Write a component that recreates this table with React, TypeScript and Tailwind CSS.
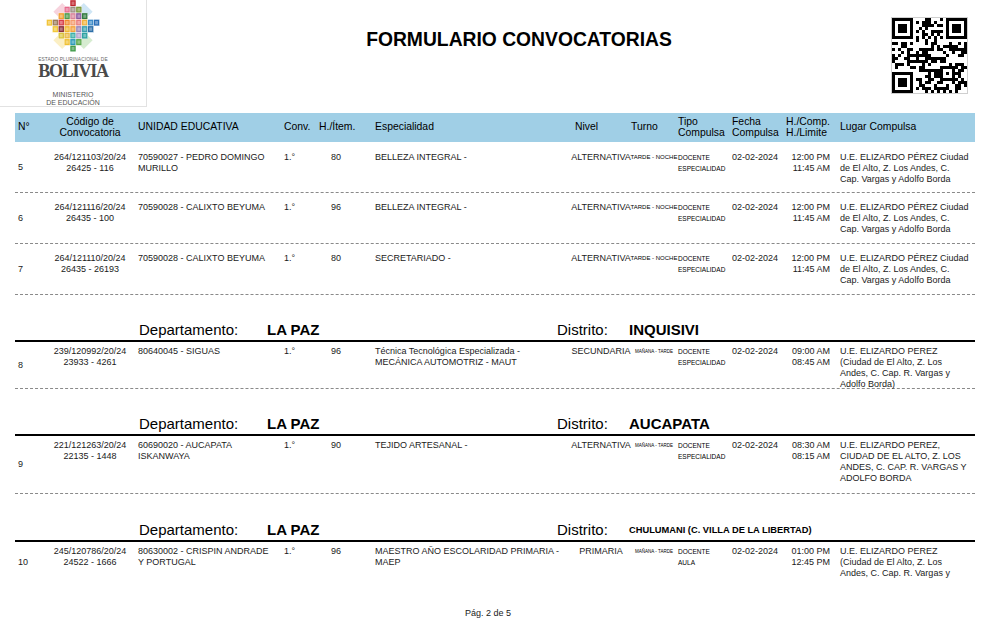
import React from "react";

type Row = {
  n: string;
  h: string;
  pt: string;
  dashed: boolean;
  codigo: string[];
  unidad: string[];
  item: string;
  esp: string[];
  nivel: string;
  turno: string;
  turnoCls: string;
  tipo: string[];
  horas: string[];
  lugar: string[];
};

type Group = {
  distrito: string;
  distritoCls: string;
  h: string;
  rows: Row[];
};

const LUGAR_ALTO = [
  "U.E. ELIZARDO PÉREZ Ciudad",
  "de El Alto, Z. Los Andes, C.",
  "Cap. Vargas y Adolfo Borda",
];

const firstRows: Row[] = [
  {
    n: "5",
    h: "h-[51px]",
    pt: "pt-[10px]",
    dashed: true,
    codigo: ["264/121103/20/24", "26425 - 116"],
    unidad: ["70590027 - PEDRO DOMINGO", "MURILLO"],
    item: "80",
    esp: ["BELLEZA INTEGRAL -"],
    nivel: "ALTERNATIVA",
    turno: "TARDE - NOCHE",
    turnoCls: "text-[6px]",
    tipo: ["DOCENTE", "ESPECIALIDAD"],
    horas: ["12:00 PM", "11:45 AM"],
    lugar: LUGAR_ALTO,
  },
  {
    n: "6",
    h: "h-[51px]",
    pt: "pt-[9px]",
    dashed: true,
    codigo: ["264/121116/20/24", "26435 - 100"],
    unidad: ["70590028 - CALIXTO BEYUMA"],
    item: "96",
    esp: ["BELLEZA INTEGRAL -"],
    nivel: "ALTERNATIVA",
    turno: "TARDE - NOCHE",
    turnoCls: "text-[6px]",
    tipo: ["DOCENTE", "ESPECIALIDAD"],
    horas: ["12:00 PM", "11:45 AM"],
    lugar: LUGAR_ALTO,
  },
  {
    n: "7",
    h: "h-[51px]",
    pt: "pt-[9px]",
    dashed: true,
    codigo: ["264/121110/20/24", "26435 - 26193"],
    unidad: ["70590028 - CALIXTO BEYUMA"],
    item: "80",
    esp: ["SECRETARIADO -"],
    nivel: "ALTERNATIVA",
    turno: "TARDE - NOCHE",
    turnoCls: "text-[6px]",
    tipo: ["DOCENTE", "ESPECIALIDAD"],
    horas: ["12:00 PM", "11:45 AM"],
    lugar: LUGAR_ALTO,
  },
];

const groups: Group[] = [
  {
    distrito: "INQUISIVI",
    distritoCls: "text-[15px]",
    h: "h-[47px]",
    rows: [
      {
        n: "8",
        h: "h-[47px]",
        pt: "pt-[4px]",
        dashed: true,
        codigo: ["239/120992/20/24", "23933 - 4261"],
        unidad: ["80640045 - SIGUAS"],
        item: "96",
        esp: ["Técnica Tecnológica Especializada -", "MECÁNICA AUTOMOTRIZ - MAUT"],
        nivel: "SECUNDARIA",
        turno: "MAÑANA - TARDE",
        turnoCls: "text-[4.5px]",
        tipo: ["DOCENTE", "ESPECIALIDAD"],
        horas: ["09:00 AM", "08:45 AM"],
        lugar: [
          "U.E. ELIZARDO PEREZ",
          "(Ciudad de El Alto, Z. Los",
          "Andes, C. Cap. R. Vargas y",
          "Adolfo Borda)",
        ],
      },
    ],
  },
  {
    distrito: "AUCAPATA",
    distritoCls: "text-[15px]",
    h: "h-[47px]",
    rows: [
      {
        n: "9",
        h: "h-[58px]",
        pt: "pt-[4px]",
        dashed: true,
        codigo: ["221/121263/20/24", "22135 - 1448"],
        unidad: ["60690020 - AUCAPATA", "ISKANWAYA"],
        item: "90",
        esp: ["TEJIDO ARTESANAL -"],
        nivel: "ALTERNATIVA",
        turno: "MAÑANA - TARDE",
        turnoCls: "text-[4.5px]",
        tipo: ["DOCENTE", "ESPECIALIDAD"],
        horas: ["08:30 AM", "08:15 AM"],
        lugar: [
          "U.E. ELIZARDO PEREZ,",
          "CIUDAD DE EL ALTO, Z. LOS",
          "ANDES, C. CAP. R. VARGAS Y",
          "ADOLFO BORDA",
        ],
      },
    ],
  },
  {
    distrito: "CHULUMANI (C. VILLA DE LA LIBERTAD)",
    distritoCls: "text-[9.3px]",
    h: "h-[48px]",
    rows: [
      {
        n: "10",
        h: "h-[41px]",
        pt: "pt-[4px]",
        dashed: false,
        codigo: ["245/120786/20/24", "24522 - 1666"],
        unidad: ["80630002 - CRISPIN ANDRADE", "Y PORTUGAL"],
        item: "96",
        esp: ["MAESTRO AÑO ESCOLARIDAD PRIMARIA -", "MAEP"],
        nivel: "PRIMARIA",
        turno: "MAÑANA - TARDE",
        turnoCls: "text-[4.5px]",
        tipo: ["DOCENTE", "AULA"],
        horas: ["01:00 PM", "12:45 PM"],
        lugar: [
          "U.E. ELIZARDO PEREZ",
          "(Ciudad de El Alto, Z. Los",
          "Andes, C. Cap. R. Vargas y",
        ],
      },
    ],
  },
];

const MOSAIC: { start: number; colors: string[] }[] = [
  { start: 4, colors: ["#c0262e"] },
  { start: 3, colors: ["#e66a8c", "#9c8f83", "#7c9a3a"] },
  { start: 2, colors: ["#f0a030", "#4c9a4a", "#d9849a", "#8a5aa0", "#2f7a40"] },
  {
    start: 0,
    colors: ["#f2c438", "#9c7b5a", "#d83c4a", "#f08a2c", "#f39a6a", "#e97a7a", "#f2b23a", "#3a8ac8", "#2a6fb8"],
  },
  { start: 1, colors: ["#f2c83a", "#8b2f3c", "#f0b830", "#f3a23a", "#9a86b8", "#3aa0b0", "#2d6fa8"] },
  { start: 2, colors: ["#d9c23a", "#e8b840", "#3ab0a8", "#b4a3cf", "#2aa0a0"] },
  { start: 3, colors: ["#f0c030", "#2a9ab8", "#58a848"] },
  { start: 4, colors: ["#3f9b48"] },
];

function Mosaic() {
  const cw = 6;
  const ch = 6.6;
  return (
    <svg width="54" height="53" viewBox="0 0 54 53" className="block">
      <polygon points="16,3 25,12 16,21 7,12" fill="#f7d3dd" />
      <polygon points="38,3 47,12 38,21 29,12" fill="#cfe6f5" />
      <polygon points="16,32 25,41 16,50 7,41" fill="#fbefc4" />
      <polygon points="38,32 47,41 38,50 29,41" fill="#d6ecd0" />
      {MOSAIC.map((row, r) =>
        row.colors.map((c, i) => {
          const x = (row.start + i) * cw;
          const y = r * ch;
          return (
            <g key={`${r}-${i}`}>
              <rect x={x} y={y} width={cw} height={ch} fill={c} stroke="#fff" strokeWidth="0.4" />
              <rect x={x + 1.5} y={y + 1.6} width={3} height={3.4} fill="#fff" opacity="0.35" />
            </g>
          );
        })
      )}
    </svg>
  );
}

function QrCode() {
  const N = 25;
  const grid: boolean[][] = [];
  let seed = 48271;
  const rnd = () => {
    seed = (seed * 1103515245 + 12345) & 0x7fffffff;
    return seed / 0x7fffffff;
  };
  for (let y = 0; y < N; y++) {
    grid.push([]);
    for (let x = 0; x < N; x++) grid[y].push(rnd() > 0.52);
  }
  const finder = (x0: number, y0: number) => {
    for (let dy = -1; dy <= 7; dy++)
      for (let dx = -1; dx <= 7; dx++) {
        const x = x0 + dx;
        const y = y0 + dy;
        if (x < 0 || y < 0 || x >= N || y >= N) continue;
        const ring = dx === 0 || dx === 6 || dy === 0 || dy === 6;
        const core = dx >= 2 && dx <= 4 && dy >= 2 && dy <= 4;
        const inside = dx >= 0 && dx <= 6 && dy >= 0 && dy <= 6;
        grid[y][x] = inside && (ring || core);
      }
  };
  finder(0, 0);
  finder(18, 0);
  finder(0, 18);
  for (let i = 8; i < 17; i++) {
    grid[6][i] = i % 2 === 0;
    grid[i][6] = i % 2 === 0;
  }
  for (let dy = 0; dy < 5; dy++)
    for (let dx = 0; dx < 5; dx++)
      grid[16 + dy][16 + dx] = dx === 0 || dx === 4 || dy === 0 || dy === 4 || (dx === 2 && dy === 2);

  return (
    <svg width="75" height="75" viewBox="0 0 25 25" shapeRendering="crispEdges" className="block">
      {grid.map((row, y) =>
        row.map((on, x) => (on ? <rect key={`${x}-${y}`} x={x} y={y} width="1" height="1" fill="#000" /> : null))
      )}
    </svg>
  );
}

function Lines({ lines }: { lines: string[] }) {
  return (
    <>
      {lines.map((l, i) => (
        <div key={i}>{l}</div>
      ))}
    </>
  );
}

function DataRow({ r }: { r: Row }) {
  return (
    <div className={`flex ${r.h} ${r.dashed ? "border-b border-dashed border-[#8a8a8a]" : ""}`}>
      <div className="w-[35px] shrink-0 pl-[3px] flex items-center">{r.n}</div>
      <div className={`flex items-start ${r.pt}`}>
        <div className="w-[80px] shrink-0 text-center whitespace-nowrap">
          <Lines lines={r.codigo} />
        </div>
        <div className="w-[150px] shrink-0 pl-[8px] whitespace-nowrap">
          <Lines lines={r.unidad} />
        </div>
        <div className="w-[30px] shrink-0 pl-[4px]">1.°</div>
        <div className="w-[45px] shrink-0 pr-[14px] text-right">{r.item}</div>
        <div className="w-[216px] shrink-0 pl-[20px] whitespace-nowrap">
          <Lines lines={r.esp} />
        </div>
        <div className="w-[60px] shrink-0 flex justify-center whitespace-nowrap">{r.nivel}</div>
        <div className="w-[46px] shrink-0 flex justify-center whitespace-nowrap text-black">
          <span className={r.turnoCls}>{r.turno}</span>
        </div>
        <div className="w-[53px] shrink-0 pl-[1px] text-[6.5px] whitespace-nowrap text-black">
          <Lines lines={r.tipo} />
        </div>
        <div className="w-[54px] shrink-0 pl-[2px]">02-02-2024</div>
        <div className="w-[51px] shrink-0 pr-[5px] text-right whitespace-nowrap">
          <Lines lines={r.horas} />
        </div>
        <div className="w-[140px] shrink-0 pl-[5px] whitespace-nowrap">
          <Lines lines={r.lugar} />
        </div>
      </div>
    </div>
  );
}

function GroupHeader({ g }: { g: Group }) {
  return (
    <div className={`flex items-end border-b-2 border-black ${g.h}`}>
      <div className="flex items-center h-[18px] mb-[1px] pl-[124px] leading-[18px] text-black">
        <div className="w-[128px] text-[15px]">Departamento:</div>
        <div className="w-[290px] text-[15px] font-bold">LA PAZ</div>
        <div className="w-[72px] text-[15px]">Distrito:</div>
        <div className={`font-bold whitespace-nowrap ${g.distritoCls}`}>{g.distrito}</div>
      </div>
    </div>
  );
}

export default function App() {
  return (
    <div className="w-[1000px] h-[622px] overflow-hidden bg-white text-black font-['Liberation_Sans',Arial,sans-serif]">
      {/* Encabezado */}
      <div className="flex h-[107px]">
        <div className="w-[147px] shrink-0 border-r border-b border-[#e2e2e2] flex flex-col items-center">
          <Mosaic />
          <div className="mt-[5px] h-[5px] text-[4.8px] leading-[5px] text-[#666] tracking-[0.1px] whitespace-nowrap">
            ESTADO PLURINACIONAL DE
          </div>
          <div className="mt-[3px] h-[13px] text-[18px] leading-[13px] font-bold text-[#4a4a4a] tracking-[-1.2px] font-['Liberation_Serif',serif]">
            BOLIVIA
          </div>
          <div className="mt-[13px] text-[7px] leading-[7.5px] text-[#555] text-center">
            MINISTERIO
            <br />
            DE EDUCACIÓN
          </div>
        </div>
        <div className="flex-1 text-center pt-[28px] text-[19.3px] leading-[24px] font-bold">
          FORMULARIO CONVOCATORIAS
        </div>
        <div className="w-[77px] h-[77px] mt-[17px] mr-[32px] shrink-0 border border-[#cfcfcf]">
          <QrCode />
        </div>
      </div>

      {/* Tabla */}
      <div className="mx-[15px] mt-[6px] w-[960px] text-[9px] leading-[11px] text-[#1a1a1a]">
        <div className="flex h-[29px] items-center bg-[#a0cfe6] text-[10.4px] leading-[10.5px] text-black">
          <div className="w-[35px] shrink-0 pl-[3px]">N°</div>
          <div className="w-[80px] shrink-0 text-center">
            Código de
            <br />
            Convocatoria
          </div>
          <div className="w-[150px] shrink-0 pl-[8px]">UNIDAD EDUCATIVA</div>
          <div className="w-[30px] shrink-0 pl-[4px]">Conv.</div>
          <div className="w-[45px] shrink-0 pl-[9px] whitespace-nowrap">H./Ítem.</div>
          <div className="w-[216px] shrink-0 pl-[20px]">Especialidad</div>
          <div className="w-[60px] shrink-0 pl-[4px]">Nivel</div>
          <div className="w-[46px] shrink-0">Turno</div>
          <div className="w-[53px] shrink-0 pl-[1px]">
            Tipo
            <br />
            Compulsa
          </div>
          <div className="w-[54px] shrink-0 pl-[2px]">
            Fecha
            <br />
            Compulsa
          </div>
          <div className="w-[51px] shrink-0 pl-[2px] whitespace-nowrap">
            H./Comp.
            <br />
            H./Limite
          </div>
          <div className="w-[140px] shrink-0 pl-[5px]">Lugar Compulsa</div>
        </div>

        {firstRows.map((r) => (
          <DataRow key={r.n} r={r} />
        ))}

        {groups.map((g) => (
          <div key={g.distrito}>
            <GroupHeader g={g} />
            {g.rows.map((r) => (
              <DataRow key={r.n} r={r} />
            ))}
          </div>
        ))}
      </div>

      <div className="mt-[25px] pr-[24px] text-center text-[9px] leading-[11px] text-[#1a1a1a]">Pág. 2 de 5</div>
    </div>
  );
}
